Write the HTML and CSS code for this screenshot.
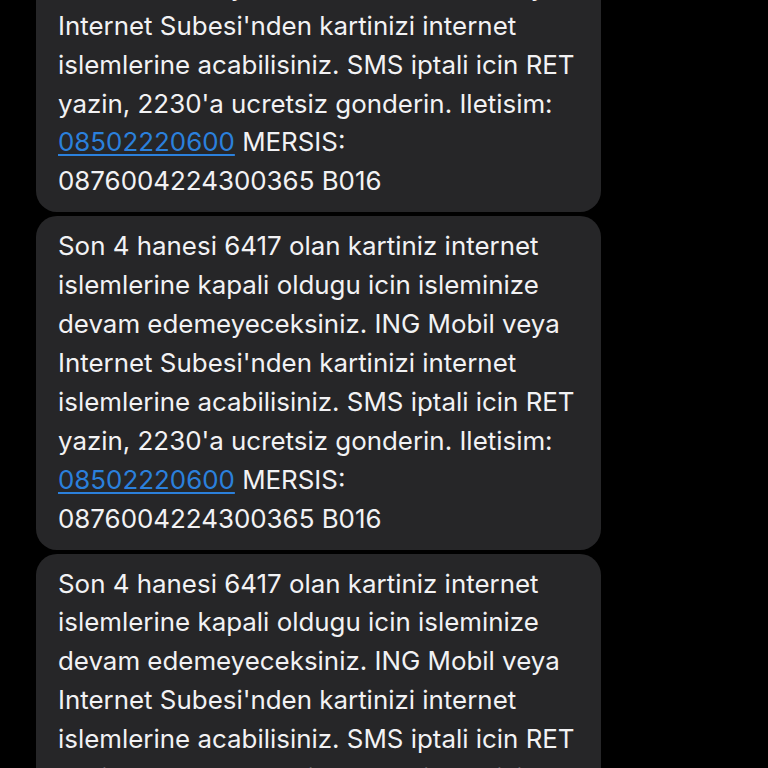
FILE: index.html
```html
<!DOCTYPE html>
<html lang="tr">
<head>
<meta charset="utf-8">
<link rel="stylesheet" href="styles.css">
</head>
<body>
<div class="thread">
  <div class="bubble">
    <p class="msg">Son 4 hanesi 6417 olan kartiniz internet<br>islemlerine kapali oldugu icin isleminize<br>devam edemeyeceksiniz. ING Mobil veya<br>Internet Subesi'nden kartinizi internet<br>islemlerine acabilisiniz. SMS iptali icin RET<br>yazin, 2230'a ucretsiz gonderin. Iletisim:<br><a class="link" href="#">08502220600</a> MERSIS:<br>0876004224300365 B016</p>
  </div>
  <div class="bubble">
    <p class="msg">Son 4 hanesi 6417 olan kartiniz internet<br>islemlerine kapali oldugu icin isleminize<br>devam edemeyeceksiniz. ING Mobil veya<br>Internet Subesi'nden kartinizi internet<br>islemlerine acabilisiniz. SMS iptali icin RET<br>yazin, 2230'a ucretsiz gonderin. Iletisim:<br><a class="link" href="#">08502220600</a> MERSIS:<br>0876004224300365 B016</p>
  </div>
  <div class="bubble">
    <p class="msg">Son 4 hanesi 6417 olan kartiniz internet<br>islemlerine kapali oldugu icin isleminize<br>devam edemeyeceksiniz. ING Mobil veya<br>Internet Subesi'nden kartinizi internet<br>islemlerine acabilisiniz. SMS iptali icin RET<br>yazin, 2230'a ucretsiz gonderin. Iletisim:<br><a class="link" href="#">08502220600</a> MERSIS:<br>0876004224300365 B016</p>
  </div>
</div>
</body>
</html>
```
FILE: styles.css
```css
html, body {
  margin: 0;
  padding: 0;
  background: #000;
  height: 768px;
  overflow: hidden;
}
.thread {
  display: flex;
  flex-direction: column;
  gap: 4px;
  padding-left: 36px;
  margin-top: -121px;
}
.bubble {
  width: 565px;
  box-sizing: border-box;
  background: #262628;
  border-radius: 21px;
  padding: 11px 22px;
}
.msg {
  margin: 0;
  font-family: Inter, "Liberation Sans", sans-serif;
  font-size: 25.9px;
  line-height: 38.9px;
  color: #f2f2f4;
  white-space: nowrap;
  letter-spacing: 0;
}
.link {
  color: #2b80dc;
  text-decoration: underline;
  text-underline-offset: 3px;
  text-decoration-thickness: 2px;
}
```
